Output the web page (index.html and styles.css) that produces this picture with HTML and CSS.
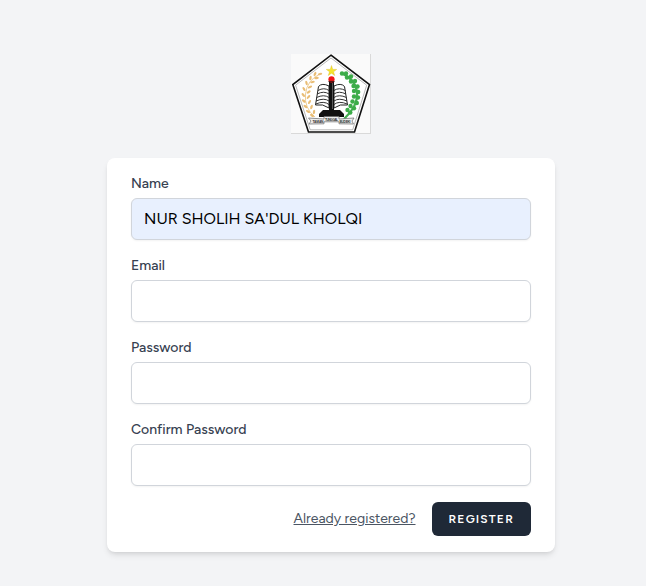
FILE: index.html
```html
<!DOCTYPE html>
<html lang="en">
<head>
<meta charset="utf-8">
<title>Register</title>
<link rel="stylesheet" href="styles.css">
</head>
<body>
<main class="page">
  <a class="logo" href="#" aria-label="Home">
    <svg width="80" height="80" viewBox="0 0 80 80">
      <defs>
        <ellipse id="grain" rx="2.3" ry="1.15"/>
        <circle id="leaf" r="2.2"/>
      </defs>
      <rect width="80" height="80" fill="#fafafa"/>
      <path d="M0 79.5H80M79.5 0V80" stroke="#d9d9d9" fill="none"/>
      <path d="M40 1.2 78.5 30.5 63.5 78H17.5L1.8 30.5Z" fill="#fff" stroke="#111" stroke-width="1.6"/>
      <path d="M40 4 75.7 31.2 61.7 75.8H19.2L4.6 31.2Z" fill="none" stroke="#888" stroke-width=".6"/>
      <path d="M29 20Q16 26 14.5 40T24 63" fill="none" stroke="#efcf98" stroke-width="1"/>
      <g fill="#e9bd76">
        <use href="#grain" transform="translate(29 20) rotate(-15)"/>
        <use href="#grain" transform="translate(24 20) rotate(-65)"/>
        <use href="#grain" transform="translate(25.5 24) rotate(-8)"/>
        <use href="#grain" transform="translate(19.5 24) rotate(-80)"/>
        <use href="#grain" transform="translate(21.5 28) rotate(-15)"/>
        <use href="#grain" transform="translate(15.5 29) rotate(75)"/>
        <use href="#grain" transform="translate(19 33) rotate(-25)"/>
        <use href="#grain" transform="translate(13 35) rotate(60)"/>
        <use href="#grain" transform="translate(17.7 38) rotate(-35)"/>
        <use href="#grain" transform="translate(12.3 41) rotate(50)"/>
        <use href="#grain" transform="translate(17.5 43) rotate(-45)"/>
        <use href="#grain" transform="translate(12.8 47) rotate(40)"/>
        <use href="#grain" transform="translate(18.5 48) rotate(-60)"/>
        <use href="#grain" transform="translate(14.5 52.5) rotate(35)"/>
        <use href="#grain" transform="translate(20.5 53) rotate(-70)"/>
        <use href="#grain" transform="translate(17 57.5) rotate(30)"/>
        <use href="#grain" transform="translate(23 58) rotate(-80)"/>
        <use href="#grain" transform="translate(21 61.5) rotate(35)"/>
      </g>
      <path d="M52 20Q65 26 66 39T53 65" fill="none" stroke="#45b052" stroke-width="2.2"/>
      <g fill="#3dac49">
        <use href="#leaf" x="51" y="19.5"/><use href="#leaf" x="55" y="19.5"/>
        <use href="#leaf" x="56" y="23.5"/><use href="#leaf" x="60" y="22.5"/>
        <use href="#leaf" x="60" y="27.5"/><use href="#leaf" x="64" y="27"/>
        <use href="#leaf" x="62.5" y="32"/><use href="#leaf" x="66.5" y="32.5"/>
        <use href="#leaf" x="63" y="37"/><use href="#leaf" x="67.2" y="38"/>
        <use href="#leaf" x="63" y="42.5"/><use href="#leaf" x="67" y="43.5"/>
        <use href="#leaf" x="61.5" y="47.5"/><use href="#leaf" x="65.8" y="49"/>
        <use href="#leaf" x="59.5" y="52"/><use href="#leaf" x="63" y="54.3"/>
        <use href="#leaf" x="56.5" y="56"/><use href="#leaf" x="59.3" y="58.6"/>
      </g>
      <path d="M40.5 11.5 41.7 15.4H45.7L42.5 17.8 43.7 21.5 40.5 19.2 37.3 21.5 38.5 17.8 35.3 15.4H39.3Z" fill="#f5e62b" stroke="#d8b824" stroke-width=".4"/>
      <path d="M38 32Q31 28.5 27.5 32.5L24.5 51Q32 49.5 38 54ZM43 32Q50 28.5 53.5 32.5L56.5 51Q49 49.5 43 54Z" fill="#fff" stroke="#222" stroke-width="1"/>
      <path d="M27 36.5Q33 33 38 36.5M26 40Q33 36.5 38 40M25.5 43.5Q33 40 38 43.5M25 47Q33 43.5 38 47M24.8 50Q33 46.5 38 50.5M43 36.5Q48 33 54.5 36.5M43 40Q48 36.5 55 40M43 43.5Q48 40 55.5 43.5M43 47Q48 43.5 56 47M43 50.5Q48 46.5 56.2 50" fill="none" stroke="#333" stroke-width="1"/>
      <path d="M38 28H43V56H49L53 60V63H28V60L32 56H38Z" fill="#111"/>
      <path d="M41.5 29V55" stroke="#777" stroke-width=".7"/>
      <circle cx="40.5" cy="25.3" r="3.1" fill="#f01818"/>
      <path d="M37.5 27.5H43.5" stroke="#511" stroke-width="1.2"/>
      <path d="M17.5 64 33 65V62.5H48V65L63 64 61 67 62.5 70 48 69.8V67.8H33V69.8L18 70 20 67Z" fill="#eee" stroke="#666" stroke-width=".7"/>
      <g class="ribbon"><text x="21.5" y="68.6" textLength="11">TAMAN</text><text x="34" y="66.5" textLength="13">TUNGGAL</text><text x="48.5" y="68.6" textLength="11">BUDEKI</text></g>
    </svg>
  </a>
  <form class="card">
    <div class="field">
      <label class="label" for="name">Name</label>
      <input class="input filled" id="name" type="text" value="NUR SHOLIH SA'DUL KHOLQI">
    </div>
    <div class="field">
      <label class="label" for="email">Email</label>
      <input class="input" id="email" type="email">
    </div>
    <div class="field">
      <label class="label" for="password">Password</label>
      <input class="input" id="password" type="password">
    </div>
    <div class="field">
      <label class="label" for="confirm">Confirm Password</label>
      <input class="input" id="confirm" type="password">
    </div>
    <div class="actions">
      <a class="login" href="#">Already registered?</a>
      <button class="button" type="button">Register</button>
    </div>
  </form>
</main>
</body>
</html>
```
FILE: styles.css
```css
* { box-sizing: border-box; }
body {
  margin: 0;
  background: #f3f4f6;
  font-family: Figtree, Inter, sans-serif;
}
.page {
  min-height: 586px;
  padding: 54px 0 34px 16px;
  display: flex;
  flex-direction: column;
  align-items: center;
}
.logo { display: block; height: 80px; margin-bottom: 24px; }
.logo svg { display: block; }
.ribbon { font: bold 3.3px "Liberation Sans", sans-serif; fill: #333; }
.card {
  width: 448px;
  padding: 16px 24px;
  background: #fff;
  border-radius: 8px;
  box-shadow: 0 4px 6px -1px rgb(0 0 0 / .1), 0 2px 4px -2px rgb(0 0 0 / .1);
}
.field { margin-bottom: 16px; }
.label {
  display: block;
  margin-bottom: 4px;
  font-size: 14px;
  font-weight: 500;
  line-height: 20px;
  color: #374151;
}
.input {
  display: block;
  width: 100%;
  height: 42px;
  padding: 7px 12px 9px;
  border: 1px solid #d1d5db;
  border-radius: 6px;
  background: #fff;
  box-shadow: 0 1px 2px rgb(0 0 0 / .05);
  font-family: inherit;
  font-size: 16px;
  line-height: 24px;
  color: #000;
}
.filled { background: #e8f0fe; }
.actions { display: flex; justify-content: flex-end; align-items: center; gap: 16px; }
.login { font-size: 14px; line-height: 20px; color: #4b5563; text-decoration: underline; }
.button {
  height: 34px;
  padding: 8px 16px;
  border: 1px solid transparent;
  border-radius: 6px;
  background: #1f2937;
  color: #fff;
  font-family: inherit;
  font-size: 12px;
  font-weight: 600;
  line-height: 16px;
  letter-spacing: .1em;
  text-transform: uppercase;
}
```
